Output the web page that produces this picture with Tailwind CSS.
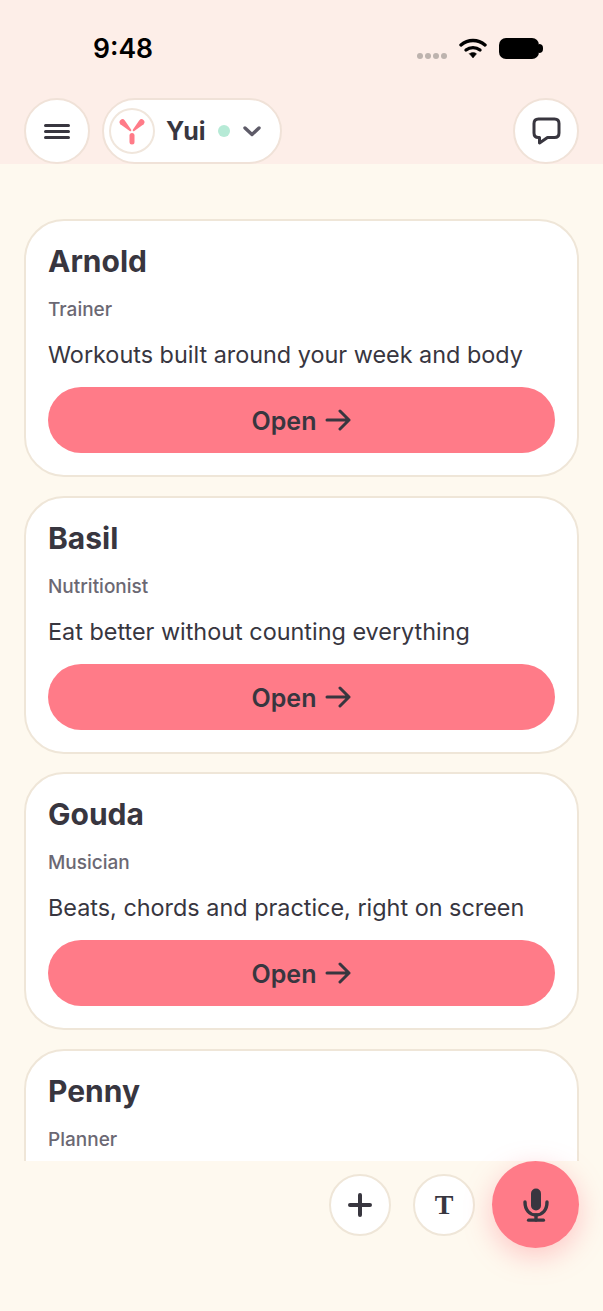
<!DOCTYPE html>
<html lang="en">
<head>
  <meta charset="UTF-8" />
  <meta name="viewport" content="width=device-width, initial-scale=1" />
  <title>Agents</title>
  <script src="https://cdn.jsdelivr.net/npm/@tailwindcss/browser@4"></script>
</head>
<body class="w-[603px] h-[1311px] overflow-hidden flex flex-col bg-[#fef9ef] font-['Inter',sans-serif] text-[#38363f]">

<!-- Status bar + top bar -->
<header class="h-[164px] shrink-0 bg-[#fdeee8] flex flex-col">
  <div class="h-[98px] shrink-0 flex items-start justify-between pl-[93px] pr-[60px] pt-[31px]">
    <span class="text-[26.5px] leading-[34px] font-semibold text-black">9:48</span>
    <div class="flex items-center gap-[12px] pt-[6px]">
      <div class="flex gap-[2px] mt-[16px]">
        <span class="w-[6px] h-[6px] rounded-full bg-[#bdb3ae]"></span>
        <span class="w-[6px] h-[6px] rounded-full bg-[#bdb3ae]"></span>
        <span class="w-[6px] h-[6px] rounded-full bg-[#bdb3ae]"></span>
        <span class="w-[6px] h-[6px] rounded-full bg-[#bdb3ae]"></span>
      </div>
      <svg width="28" height="21" viewBox="0 0 28 21" fill="none" stroke="black" stroke-width="3.4" stroke-linecap="round">
        <path d="M2 7C9 1 19 1 26 7" />
        <path d="M7 12C11 8.8 17 8.8 21 12" />
        <path d="M10.5 15.8L14 20L17.5 15.8C15.5 14 12.5 14 10.5 15.8Z" fill="black" stroke-width="0.5" stroke-linejoin="round" />
      </svg>
      <div class="flex items-center">
        <span class="w-[40px] h-[21px] rounded-[7px] bg-black"></span>
        <span class="w-[4px] h-[9px] rounded-r-full bg-black"></span>
      </div>
    </div>
  </div>
  <div class="flex items-start justify-between px-[24px]">
    <div class="flex items-center gap-[12px]">
      <button class="w-[66px] h-[66px] rounded-full bg-white border-2 border-[#f0e2d8] flex items-center justify-center">
        <svg width="26" height="15" viewBox="0 0 26 15" stroke="#38363f" stroke-width="3" stroke-linecap="round">
          <path d="M1.5 1.5H24.5M1.5 7.5H24.5M1.5 13.5H24.5" />
        </svg>
      </button>
      <div class="h-[66px] w-[180px] rounded-full bg-white border-2 border-[#f0e2d8] flex items-center pl-[5px]">
        <div class="w-[46px] h-[46px] shrink-0 rounded-full border-2 border-[#f0e6dc] flex items-center justify-center">
          <svg width="28" height="28" viewBox="0 0 28 28" fill="#ff7b88">
            <path d="M2.36 7.16A2.9 2.9 0 0 1 6.64 3.24L13.2 12.8A1 1 0 0 1 11.7 14Z" />
            <path d="M25.64 7.16A2.9 2.9 0 0 0 21.36 3.24L14.8 12.8A1 1 0 0 0 16.3 14Z" />
            <path d="M14 18.5V25" fill="none" stroke="#ff7b88" stroke-width="5" stroke-linecap="round" />
          </svg>
        </div>
        <span class="ml-[11px] text-[25px] leading-[30px] font-bold">Yui</span>
        <span class="ml-[12px] w-[12px] h-[12px] rounded-full bg-[#b6ead6]"></span>
        <svg class="ml-[13px]" width="18" height="12" viewBox="0 0 18 12" fill="none" stroke="#5e5b68" stroke-width="3.4" stroke-linecap="round" stroke-linejoin="round">
          <path d="M2 3L9 9.5L16 3" />
        </svg>
      </div>
    </div>
    <button class="w-[66px] h-[66px] rounded-full bg-white border-2 border-[#f0e2d8] flex items-center justify-center">
      <svg width="29" height="28" viewBox="0 0 29 28" fill="none" stroke="#38363f" stroke-width="3" stroke-linejoin="round">
        <path d="M6.5 2H22.5C25.5 2 27 3.5 27 6.5V16C27 19 25.5 20.5 22.5 20.5H15.5L7.5 26V20.5H6.5C3.5 20.5 2 19 2 16V6.5C2 3.5 3.5 2 6.5 2Z" />
      </svg>
    </button>
  </div>
</header>

<!-- Agent list -->
<main class="h-[997px] shrink-0 overflow-hidden flex flex-col gap-[18.6px] px-[24px] pt-[55px]">
  <article class="shrink-0 h-[258px] rounded-[40px] bg-white border-2 border-[#efe6d8] px-[22px] pt-[22px]">
    <h2 class="text-[30px] leading-[36px] font-bold">Arnold</h2>
    <p class="mt-[19px] text-[19px] leading-[24px] font-medium text-[#6b6873]">Trainer</p>
    <p class="mt-[17px] text-[23.4px] leading-[32px] whitespace-nowrap">Workouts built around your week and body</p>
    <button class="mt-[16px] w-full h-[66px] rounded-full bg-[#ff7b88] flex items-center justify-center gap-[9px] text-[25px] font-semibold">
      <span class="pt-[4px]">Open</span>
      <svg width="26" height="22" viewBox="0 0 26 22" fill="none" stroke="#38363f" stroke-width="3" stroke-linecap="round" stroke-linejoin="round"><path d="M2 11H24M15 2L24 11L15 20" /></svg>
    </button>
  </article>
  <article class="shrink-0 h-[258px] rounded-[40px] bg-white border-2 border-[#efe6d8] px-[22px] pt-[22px]">
    <h2 class="text-[30px] leading-[36px] font-bold">Basil</h2>
    <p class="mt-[19px] text-[19px] leading-[24px] font-medium text-[#6b6873]">Nutritionist</p>
    <p class="mt-[17px] text-[23.4px] leading-[32px] whitespace-nowrap">Eat better without counting everything</p>
    <button class="mt-[16px] w-full h-[66px] rounded-full bg-[#ff7b88] flex items-center justify-center gap-[9px] text-[25px] font-semibold">
      <span class="pt-[4px]">Open</span>
      <svg width="26" height="22" viewBox="0 0 26 22" fill="none" stroke="#38363f" stroke-width="3" stroke-linecap="round" stroke-linejoin="round"><path d="M2 11H24M15 2L24 11L15 20" /></svg>
    </button>
  </article>
  <article class="shrink-0 h-[258px] rounded-[40px] bg-white border-2 border-[#efe6d8] px-[22px] pt-[22px]">
    <h2 class="text-[30px] leading-[36px] font-bold">Gouda</h2>
    <p class="mt-[19px] text-[19px] leading-[24px] font-medium text-[#6b6873]">Musician</p>
    <p class="mt-[17px] text-[23.4px] leading-[32px] whitespace-nowrap">Beats, chords and practice, right on screen</p>
    <button class="mt-[16px] w-full h-[66px] rounded-full bg-[#ff7b88] flex items-center justify-center gap-[9px] text-[25px] font-semibold">
      <span class="pt-[4px]">Open</span>
      <svg width="26" height="22" viewBox="0 0 26 22" fill="none" stroke="#38363f" stroke-width="3" stroke-linecap="round" stroke-linejoin="round"><path d="M2 11H24M15 2L24 11L15 20" /></svg>
    </button>
  </article>
  <article class="shrink-0 h-[258px] rounded-[40px] bg-white border-2 border-[#efe6d8] px-[22px] pt-[22px]">
    <h2 class="text-[30px] leading-[36px] font-bold">Penny</h2>
    <p class="mt-[19px] text-[19px] leading-[24px] font-medium text-[#6b6873]">Planner</p>
  </article>
</main>

<!-- Composer actions -->
<footer class="flex items-start justify-end pr-[24px] gap-[22px]">
  <button class="mt-[13px] w-[62px] h-[62px] rounded-full bg-white border-2 border-[#efe6d8] flex items-center justify-center">
    <svg width="24" height="24" viewBox="0 0 24 24" stroke="#38363f" stroke-width="4" stroke-linecap="round"><path d="M12 2V22M2 12H22" /></svg>
  </button>
  <div class="flex items-start gap-[17px]">
    <button class="mt-[13px] w-[62px] h-[62px] rounded-full bg-white border-2 border-[#efe6d8] flex items-center justify-center font-['Liberation_Serif',serif] text-[28px] font-bold leading-none">T</button>
    <button class="w-[87px] h-[87px] rounded-full bg-[#ff7b88] shadow-[0_8px_28px_rgba(255,123,136,0.4)] flex items-center justify-center">
      <svg width="26" height="34" viewBox="0 0 26 34" fill="none" stroke="#38363f" stroke-linecap="round">
        <rect x="8" y="0.5" width="10" height="22" rx="5" fill="#38363f" stroke="none" />
        <path d="M2 14C2 22 6.5 27 13 27C19.5 27 24 22 24 14" stroke-width="3.4" />
        <path d="M13 27V32" stroke-width="3.4" />
        <path d="M5.5 32.2H20.5" stroke-width="3.2" />
      </svg>
    </button>
  </div>
</footer>

</body>
</html>
